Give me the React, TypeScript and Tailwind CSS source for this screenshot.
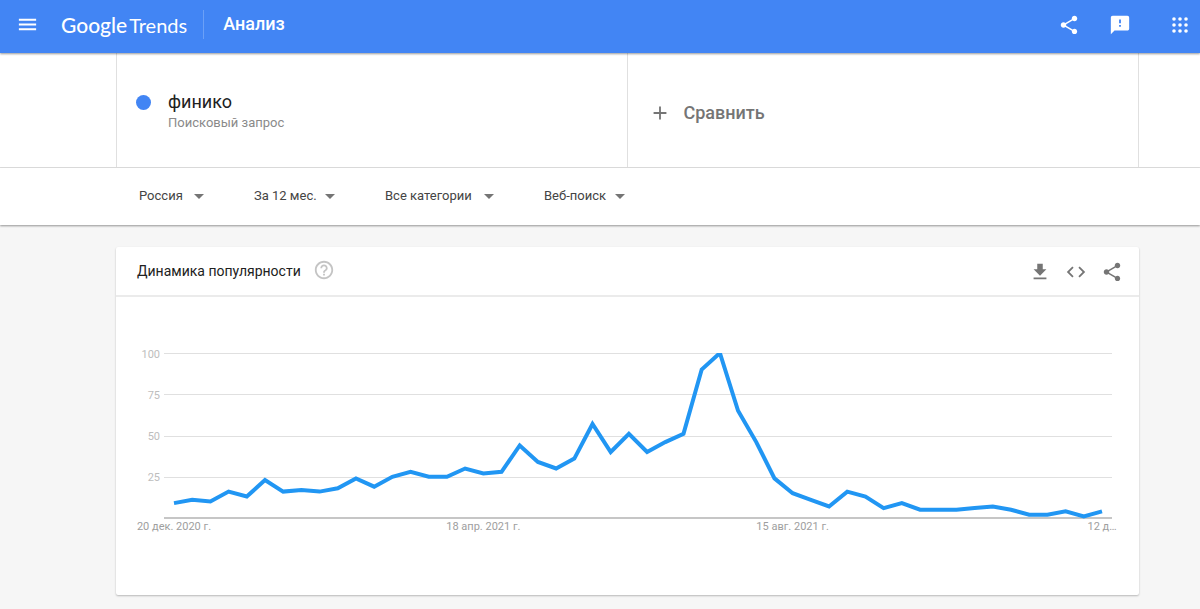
import { MdCode, MdFeedback, MdGetApp, MdHelpOutline, MdMenu, MdShare, MdAdd } from "react-icons/md";

const values = [
  9, 11, 10, 16, 13, 23, 16, 17, 16, 18, 24, 19, 25, 28, 25, 25, 30, 27, 28, 44, 34, 30, 36, 57, 40, 51,
  40, 46, 51, 90, 100, 65, 46, 24, 15, 11, 7, 16, 13, 6, 9, 5, 5, 5, 6, 7, 5, 2, 2, 4, 1, 4,
];

const ticks = [
  { index: 0, label: "20 дек. 2020 г." },
  { index: 17, label: "18 апр. 2021 г." },
  { index: 34, label: "15 авг. 2021 г." },
  { index: 51, label: "12 д…" },
];

const filters = [
  { id: "geo", name: "Регион", value: "Россия", width: "w-[65px]" },
  { id: "period", name: "Период", value: "За 12 мес.", width: "w-[81px]" },
  { id: "category", name: "Категория", value: "Все категории", width: "w-[109px]" },
  { id: "source", name: "Тип поиска", value: "Веб-поиск", width: "w-[81px]" },
];

const FIRST_X = 58;
const LAST_X = 986;
const BASE_Y = 221;
const PLOT_HEIGHT = 165;

function xAt(index: number) {
  return FIRST_X + (index * (LAST_X - FIRST_X)) / (values.length - 1);
}

function yAt(value: number) {
  return BASE_Y - (value * PLOT_HEIGHT) / 100;
}

function AppsIcon() {
  return (
    <svg viewBox="0 0 24 24" className="size-6" fill="currentColor" aria-hidden="true">
      {[6, 12, 18].map((cy) => [6, 12, 18].map((cx) => <circle key={`${cx}-${cy}`} cx={cx} cy={cy} r="1.8" />))}
    </svg>
  );
}

function Header() {
  return (
    <header className="relative z-10 flex h-[53px] items-center bg-[#4285f4] pb-1 pr-2 pl-4 text-white shadow-[0_1px_2px_rgba(0,0,0,0.4)]">
      <button type="button" aria-label="Меню">
        <MdMenu className="size-[23px]" />
      </button>
      <a href="#" className="ml-[22px] flex items-baseline gap-0.5 font-['Lato',sans-serif] leading-6">
        <span className="text-[21px] font-medium">Google</span>
        <span className="text-xl leading-6">Trends</span>
      </a>
      <div className="ml-4 h-[29px] w-px bg-[#6ba0f7]" />
      <h1 className="ml-[19px] pb-px text-lg leading-6 font-medium">Анализ</h1>
      <div className="ml-auto flex items-center">
        <button type="button" aria-label="Поделиться">
          <MdShare className="size-[22px]" />
        </button>
        <button type="button" aria-label="Отправить отзыв" className="ml-[29px]">
          <MdFeedback className="size-[22px]" />
        </button>
        <button type="button" aria-label="Приложения Google" className="ml-[37px]">
          <AppsIcon />
        </button>
      </div>
    </header>
  );
}

function SearchTerms() {
  return (
    <section className="border-b border-[#e0e0e0] bg-white">
      <div className="mr-[61px] ml-[116px] grid h-[114px] grid-cols-2 border-r border-l border-[#e0e0e0]">
        <div className="flex items-start border-r border-[#e0e0e0] pt-[39px] pl-[19px]">
          <span className="mt-[3px] size-[15px] rounded-full bg-[#4285f4]" />
          <div className="ml-[17px]">
            <div className="text-lg leading-5 text-[#212121]">финико</div>
            <div className="text-[13px] leading-[22px] text-[#8a8a8a]">Поисковый запрос</div>
          </div>
        </div>
        <button type="button" className="flex items-center pt-1.5 pl-[21px] text-[#757575]">
          <MdAdd className="size-[22px]" />
          <span className="ml-[13px] text-lg font-medium">Сравнить</span>
        </button>
      </div>
    </section>
  );
}

function Filters() {
  return (
    <section className="relative flex h-[57px] items-center gap-[50px] bg-white pb-px pl-[139px] shadow-[0_1px_2px_rgba(0,0,0,0.4)]">
      {filters.map((filter) => (
        <div key={filter.id} className={`relative ${filter.width}`}>
          <select
            id={filter.id}
            aria-label={filter.name}
            className="block h-8 w-full appearance-none bg-transparent text-[13px] text-[#444]"
          >
            <option>{filter.value}</option>
          </select>
          <svg viewBox="0 0 10 5" className="pointer-events-none absolute top-3.5 right-0 h-[5px] w-2.5" aria-hidden="true">
            <path d="M0 0h10L5 5z" fill="#757575" />
          </svg>
        </div>
      ))}
    </section>
  );
}

function InterestChart() {
  const points = values.map((value, index) => `${xAt(index)},${yAt(value)}`).join(" ");

  return (
    <svg viewBox="0 0 1023 298" className="block w-full" role="img" aria-label="Динамика популярности">
      {[25, 50, 75, 100].map((value) => (
        <g key={value}>
          <rect x="48" y={Math.round(yAt(value))} width="948" height="1" fill="#e0e0e0" />
          <text x="44" y={Math.floor(yAt(value)) + 5} textAnchor="end" fontSize="11" fill="#bdbdbd">
            {value}
          </text>
        </g>
      ))}
      <rect x="48" y={BASE_Y - 1} width="948" height="2" fill="#c6c6c6" />
      <clipPath id="plot-area">
        <rect x="48" y="56" width="948" height="167" />
      </clipPath>
      <polyline points={points} fill="none" stroke="#2196f3" strokeWidth="4" clipPath="url(#plot-area)" />
      {ticks.map((tick) => (
        <text key={tick.index} x={xAt(tick.index)} y="233" textAnchor="middle" fontSize="11" fill="#9e9e9e">
          {tick.label}
        </text>
      ))}
    </svg>
  );
}

export default function App() {
  return (
    <div className="min-h-screen bg-[#f6f6f6] font-['Roboto',sans-serif]">
      <Header />
      <SearchTerms />
      <Filters />
      <main className="pt-[22px] pr-[61px] pb-3 pl-[116px]">
        <section className="rounded-xs bg-white shadow-[0_1px_2px_rgba(0,0,0,0.25)]">
          <div className="flex h-[50px] items-center border-b-2 border-[#ebebeb] pr-4 pl-[21px] text-[#757575]">
            <h2 className="text-sm leading-5 text-[#212121]">Динамика популярности</h2>
            <button type="button" aria-label="Справка" className="ml-3 pb-0.5 text-[#c4c4c4]">
              <MdHelpOutline className="size-[22px]" />
            </button>
            <div className="ml-auto flex items-center gap-3.5 pt-0.5">
              <button type="button" aria-label="Скачать">
                <MdGetApp className="size-[22px]" />
              </button>
              <button type="button" aria-label="Код для вставки">
                <MdCode className="size-[22px]" />
              </button>
              <button type="button" aria-label="Поделиться">
                <MdShare className="size-[22px]" />
              </button>
            </div>
          </div>
          <InterestChart />
        </section>
      </main>
    </div>
  );
}
